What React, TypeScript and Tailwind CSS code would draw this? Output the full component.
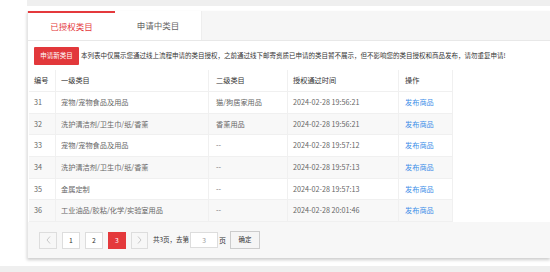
import React from "react";

interface Row {
  id: number;
  first: string;
  second: string;
  time: string;
}

const rows: Row[] = [
  { id: 31, first: "宠物/宠物食品及用品", second: "猫/狗居家用品", time: "2024-02-28 19:56:21" },
  { id: 32, first: "洗护清洁剂/卫生巾/纸/香薰", second: "香薰用品", time: "2024-02-28 19:56:21" },
  { id: 33, first: "宠物/宠物食品及用品", second: "--", time: "2024-02-28 19:57:12" },
  { id: 34, first: "洗护清洁剂/卫生巾/纸/香薰", second: "--", time: "2024-02-28 19:57:13" },
  { id: 35, first: "金属定制", second: "--", time: "2024-02-28 19:57:13" },
  { id: 36, first: "工业油品/胶粘/化学/实验室用品", second: "--", time: "2024-02-28 20:01:46" },
];

function Chevron({ dir }: { dir: "left" | "right" }) {
  return (
    <svg width="5" height="8" viewBox="0 0 5 8" fill="none">
      <path
        d={dir === "left" ? "M4 0.5L1 4L4 7.5" : "M1 0.5L4 4L1 7.5"}
        stroke="#bbbbbb"
        strokeWidth="0.8"
      />
    </svg>
  );
}

export default function App() {
  return (
    <div className="w-[550px] h-[272px] bg-white overflow-hidden flex flex-col font-['Noto_Sans_CJK_SC',sans-serif]">
      {/* top strip */}
      <div className="ml-[27px] h-[6px] bg-[#efefef] shrink-0" />
      <div className="h-[5px] shrink-0" />

      {/* card */}
      <div className="ml-[27px] flex flex-col border-l border-[#e6e6e6] shadow-[0_2px_3px_rgba(0,0,0,0.2)] shrink-0">
        {/* tabs */}
        <div className="flex h-[30px] bg-[#f6f6f6] border-b border-[#e8e8e8]">
          <div className="w-[87px] bg-white border-t-2 border-[#e4393c] flex items-center justify-center text-[8.5px] text-[#e4393c]">
            已授权类目
          </div>
          <div className="w-[87px] bg-white border-r border-[#eeeeee] flex items-center justify-center text-[8.5px] text-[#666666]">
            申请中类目
          </div>
        </div>

        {/* body */}
        <div className="bg-white pt-[6px]">
          <div className="flex items-center h-[18px] pl-[6px] mb-[5px]">
            <div className="w-[45px] h-[18px] bg-[#e2383b] text-white text-[6.5px] flex items-center justify-center rounded-[1px]">
              申请新类目
            </div>
            <span className="ml-[2px] text-[6.5px] text-[#333333] whitespace-nowrap">
              本列表中仅展示您通过线上流程申请的类目授权，之前通过线下邮寄资质已申请的类目暂不展示，但不影响您的类目授权和商品发布，请勿重复申请!
            </span>
          </div>

          {/* table */}
          <div className="ml-[1px] w-[424px] text-[7.2px]">
            <div className="flex h-[22px] items-center text-[#333333] border-b border-[#f0f0f0]">
              <div className="w-[27px] h-full flex items-center pl-[5px] border-r border-[#f0f0f0]">编号</div>
              <div className="w-[153px] h-full flex items-center pl-[5px] border-r border-[#f0f0f0]">一级类目</div>
              <div className="w-[79px] h-full flex items-center pl-[7px] border-r border-[#f0f0f0]">二级类目</div>
              <div className="w-[111px] h-full flex items-center pl-[5px] border-r border-[#f0f0f0]">授权通过时间</div>
              <div className="w-[54px] h-full flex items-center pl-[6px] border-r border-[#f0f0f0]">操作</div>
            </div>
            {rows.map((r, i) => (
              <div
                key={r.id}
                className={
                  "flex h-[21.7px] items-center text-[#666666] border-b border-[#f0f0f0] " +
                  (i % 2 === 1 ? "bg-[#f8f8f8]" : "bg-white")
                }
              >
                <div className="w-[27px] h-full flex items-center pl-[5px] border-r border-[#f0f0f0]">{r.id}</div>
                <div className="w-[153px] h-full flex items-center pl-[5px] border-r border-[#f0f0f0] whitespace-nowrap">{r.first}</div>
                <div className="w-[79px] h-full flex items-center pl-[7px] border-r border-[#f0f0f0] whitespace-nowrap">{r.second}</div>
                <div className="w-[111px] h-full flex items-center pl-[5px] border-r border-[#f0f0f0] whitespace-nowrap">{r.time}</div>
                <div className="w-[54px] h-full flex items-center pl-[6px] border-r border-[#f0f0f0] text-[#3d8ee8]">发布商品</div>
              </div>
            ))}
          </div>
        </div>

        {/* pagination */}
        <div className="h-[36px] bg-[#f7f7f7] flex items-center pl-[11px] text-[6.8px] text-[#333333]">
          <div className="w-[18px] h-[17px] border border-[#dddddd] bg-[#f7f7f7] flex items-center justify-center">
            <Chevron dir="left" />
          </div>
          <div className="ml-[5px] w-[18px] h-[17px] border border-[#dddddd] bg-white flex items-center justify-center">1</div>
          <div className="ml-[5px] w-[18px] h-[17px] border border-[#dddddd] bg-white flex items-center justify-center">2</div>
          <div className="ml-[5px] w-[18px] h-[17px] bg-[#e4393c] text-white flex items-center justify-center">3</div>
          <div className="ml-[5px] w-[17px] h-[17px] border border-[#dddddd] bg-[#f7f7f7] flex items-center justify-center">
            <Chevron dir="right" />
          </div>
          <span className="ml-[5px] text-[6.5px]">共3页，去第</span>
          <div className="ml-[1px] w-[28px] h-[16px] border border-[#dddddd] bg-white flex items-center justify-center text-[#999999]">3</div>
          <span className="ml-[1px] text-[7px]">页</span>
          <div className="ml-[4px] w-[30px] h-[18px] border border-[#cccccc] bg-[#f5f5f5] flex items-center justify-center text-[6.5px]">确定</div>
        </div>
      </div>

      <div className="h-[8px] shrink-0" />
      <div className="flex-1 bg-[#efefef]" />
    </div>
  );
}
